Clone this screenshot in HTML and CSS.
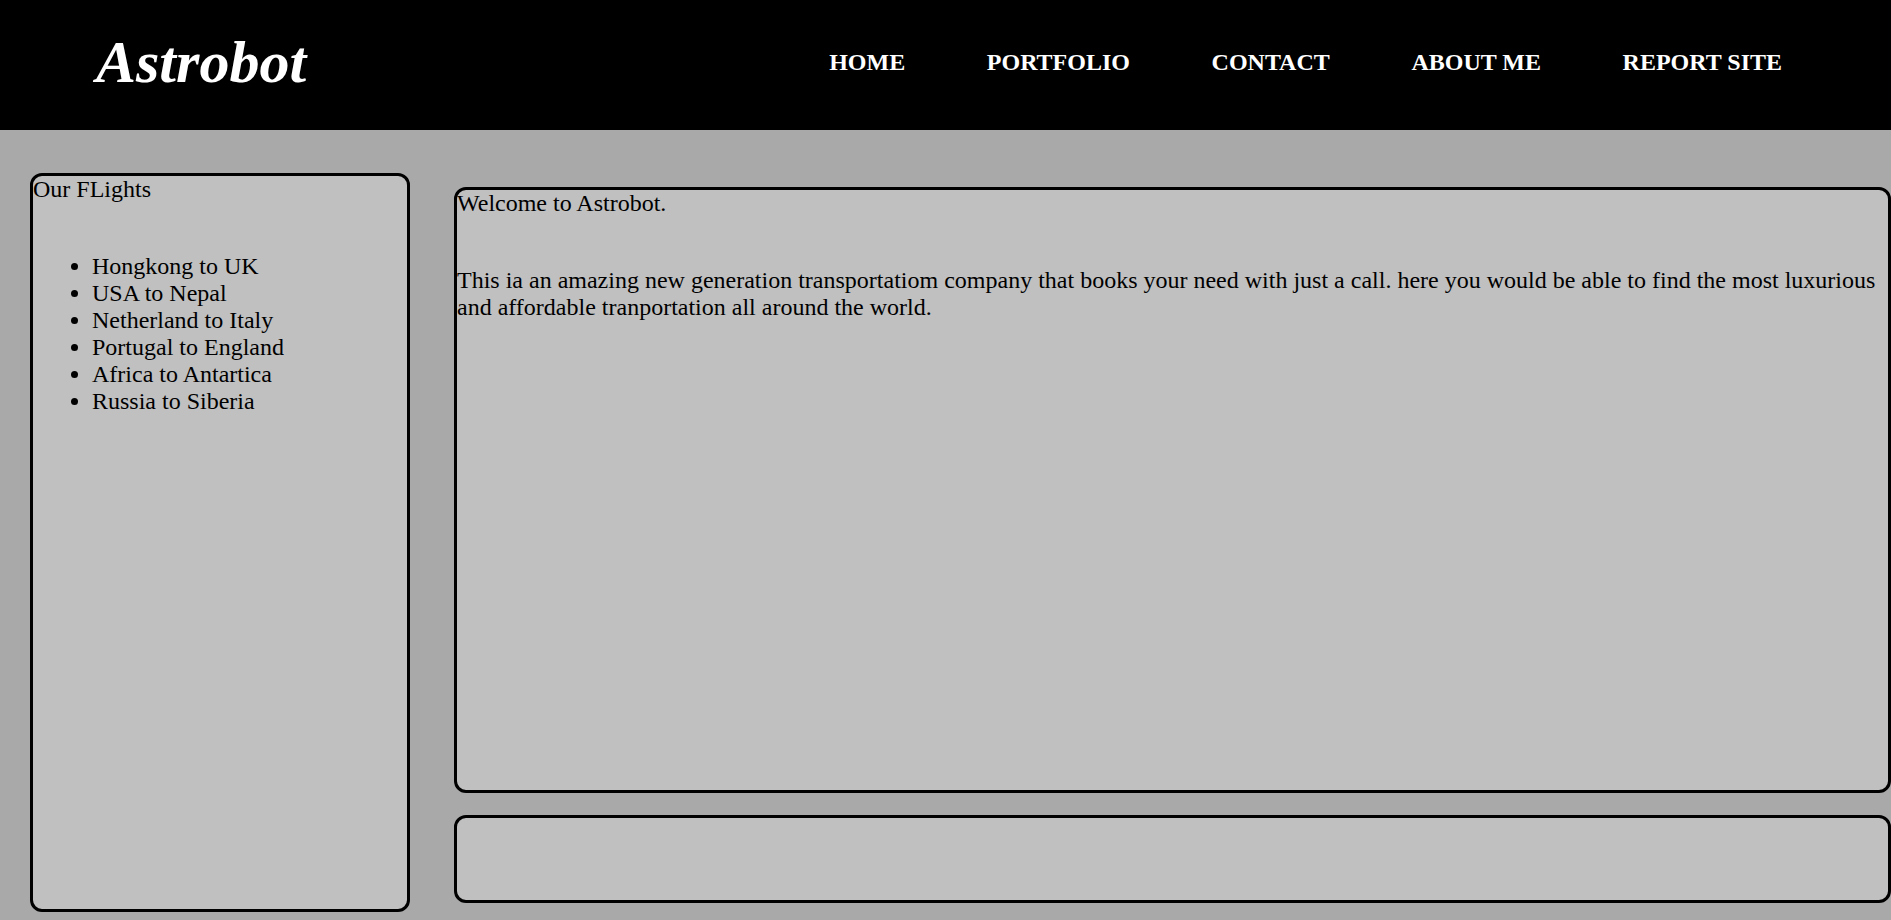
FILE: index.html
```html
<!DOCTYPE html>
<html lang="en">
<head>
<meta charset="utf-8">
<title>Astrobot</title>
<link rel="stylesheet" href="styles.css">
</head>
<body>
<header class="topbar">
  <div class="logo">Astrobot</div>
  <nav class="nav">
    <a class="nav-link" href="#">HOME</a>
    <a class="nav-link" href="#">PORTFOLIO</a>
    <a class="nav-link" href="#">CONTACT</a>
    <a class="nav-link" href="#">ABOUT ME</a>
    <a class="nav-link" href="#">REPORT SITE</a>
  </nav>
</header>
<div class="layout">
  <aside class="flights box">
    <div class="flights-title">Our FLights</div>
    <ul class="flight-list">
      <li>Hongkong to UK</li>
      <li>USA to Nepal</li>
      <li>Netherland to Italy</li>
      <li>Portugal to England</li>
      <li>Africa to Antartica</li>
      <li>Russia to Siberia</li>
    </ul>
  </aside>
  <div class="content">
    <main class="main box">
      <div class="welcome">Welcome to Astrobot.</div>
      <p class="intro">This ia an amazing new generation transportatiom company that books your need with just a call. here you would be able to find the most luxurious and affordable tranportation all around the world.</p>
    </main>
    <section class="footer-box box"></section>
  </div>
</div>
</body>
</html>
```

FILE: styles.css
```css
html, body {
  margin: 0;
  padding: 0;
}

body {
  background: #a9a9a9;
  font-family: "Liberation Serif", "Times New Roman", serif;
  font-size: 24px;
  color: #000;
  height: 920px;
  overflow: hidden;
}

.topbar {
  height: 130px;
  background: #000;
  display: flex;
  align-items: flex-start;
}

.logo {
  margin-top: 28px;
  margin-left: 96px;
  font-size: 60px;
  font-weight: bold;
  font-style: italic;
  color: #fff;
  line-height: normal;
}

.nav {
  margin-left: auto;
  margin-top: 49px;
  padding-right: 109px;
  display: flex;
  gap: 81.6px;
}

.nav-link {
  color: #fff;
  text-decoration: none;
  font-weight: bold;
  font-size: 24px;
  white-space: nowrap;
}

.layout {
  display: flex;
  align-items: flex-start;
  padding: 43px 0 0 30px;
}

.box {
  box-sizing: border-box;
  background: #c0c0c0;
  border: 3px solid #000;
  border-radius: 12px;
}

.flights {
  width: 380px;
  height: 739px;
  flex: none;
}

.flights-title {
  line-height: normal;
}

.flight-list {
  margin: 50px 0 0 0;
  padding-left: 59px;
}

.content {
  flex: 1;
  margin-left: 44px;
  padding-top: 14px;
  display: flex;
  flex-direction: column;
  gap: 22px;
}

.main {
  height: 606px;
}

.intro {
  margin: 50px 0 0 0;
}

.footer-box {
  height: 88px;
}
```
